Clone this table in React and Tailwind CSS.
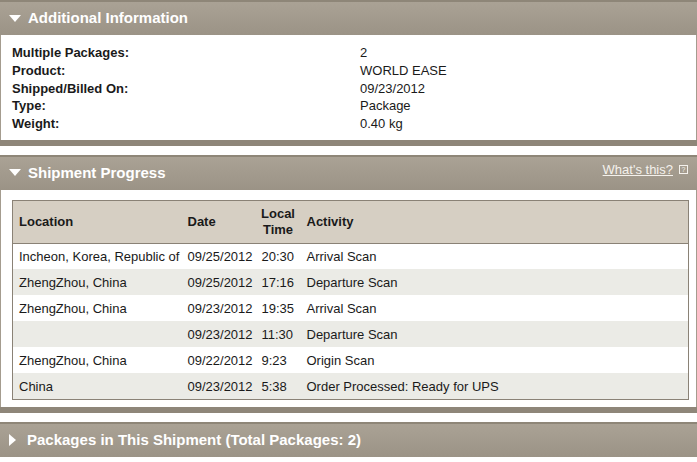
import { useState } from 'react'

const info = [
  ['Multiple Packages:', '2'],
  ['Product:', 'WORLD EASE'],
  ['Shipped/Billed On:', '09/23/2012'],
  ['Type:', 'Package'],
  ['Weight:', '0.40 kg'],
]

const progress = [
  ['Incheon, Korea, Republic of', '09/25/2012', '20:30', 'Arrival Scan'],
  ['ZhengZhou, China', '09/25/2012', '17:16', 'Departure Scan'],
  ['ZhengZhou, China', '09/23/2012', '19:35', 'Arrival Scan'],
  ['', '09/23/2012', '11:30', 'Departure Scan'],
  ['ZhengZhou, China', '09/22/2012', '9:23', 'Origin Scan'],
  ['China', '09/23/2012', '5:38', 'Order Processed: Ready for UPS'],
]

function Arrow({ open }) {
  return open ? (
    <svg width="12" height="8" viewBox="0 0 12 8" className="shrink-0">
      <path d="M0 0 H12 L6 7 Z" fill="#fff" />
    </svg>
  ) : (
    <svg width="8" height="12" viewBox="0 0 8 12" className="shrink-0">
      <path d="M0 0 V12 L7 6 Z" fill="#fff" />
    </svg>
  )
}

function PanelHeader({ title, open, right }) {
  return (
    <div className="h-[35px] flex items-center pl-[9px] pr-[9px] border-t-2 border-[#8e8678] bg-gradient-to-b from-[#aaa295] to-[#9b9386]">
      <Arrow open={open} />
      <span className={`${open ? 'ml-[7px]' : 'ml-[10px]'} text-[15px] font-bold text-white`}>{title}</span>
      {right}
    </div>
  )
}

export default function App() {
  const [open] = useState(true)

  return (
    <div className="w-[697px] h-[462px] bg-white overflow-hidden text-[13px] text-[#1a1a1a]" style={{ fontFamily: '"Liberation Sans", Arial, sans-serif' }}>
      <div>
        <PanelHeader title="Additional Information" open={open} />
        <div className="border-x border-[#a49c8f] pt-[9px] pb-[7px] pl-[11px]">
          {info.map(([k, v]) => (
            <div key={k} className="flex leading-[17.75px]">
              <span className="w-[348px] font-bold">{k}</span>
              <span>{v}</span>
            </div>
          ))}
        </div>
        <div className="h-[6px] bg-[#8e8679]" />
      </div>

      <div className="mt-[9px]">
        <PanelHeader
          title="Shipment Progress"
          open={open}
          right={
            <a href="#" className="ml-auto -mt-[8px] flex items-center gap-[6px] text-[13px] text-[#f4f1ec] underline">
              What's this?
              <span className="w-[9px] h-[9px] border border-[#f4f1ec] text-[7px] leading-[7px] flex items-center justify-center no-underline">?</span>
            </a>
          }
        />
        <div className="border-x border-[#a49c8f] pt-[10px] pb-[7px] px-[11px]">
          <table className="w-[677px] border border-[#8a8276] border-collapse">
            <thead>
              <tr className="bg-[#d6cfc3] h-[43px] border-b border-[#8a8276] text-left">
                <th className="w-[169px] pl-[6px] font-bold">Location</th>
                <th className="w-[74px] pl-[6px] font-bold">Date</th>
                <th className="w-[45px] font-bold text-center leading-[16px]">Local<br />Time</th>
                <th className="pl-[6px] font-bold">Activity</th>
              </tr>
            </thead>
            <tbody>
              {progress.map((r, i) => (
                <tr key={i} className={`h-[26px] ${i % 2 ? 'bg-[#ebebe6]' : 'bg-white'}`}>
                  <td className="pl-[6px] pt-[1px]">{r[0]}</td>
                  <td className="pl-[6px] pt-[1px]">{r[1]}</td>
                  <td className="pl-[6px] pt-[1px]">{r[2]}</td>
                  <td className="pl-[6px] pt-[1px]">{r[3]}</td>
                </tr>
              ))}
            </tbody>
          </table>
        </div>
        <div className="h-[6px] bg-[#8e8679]" />
      </div>

      <div className="mt-[9px]">
        <PanelHeader title="Packages in This Shipment (Total Packages: 2)" open={false} />
      </div>
    </div>
  )
}
